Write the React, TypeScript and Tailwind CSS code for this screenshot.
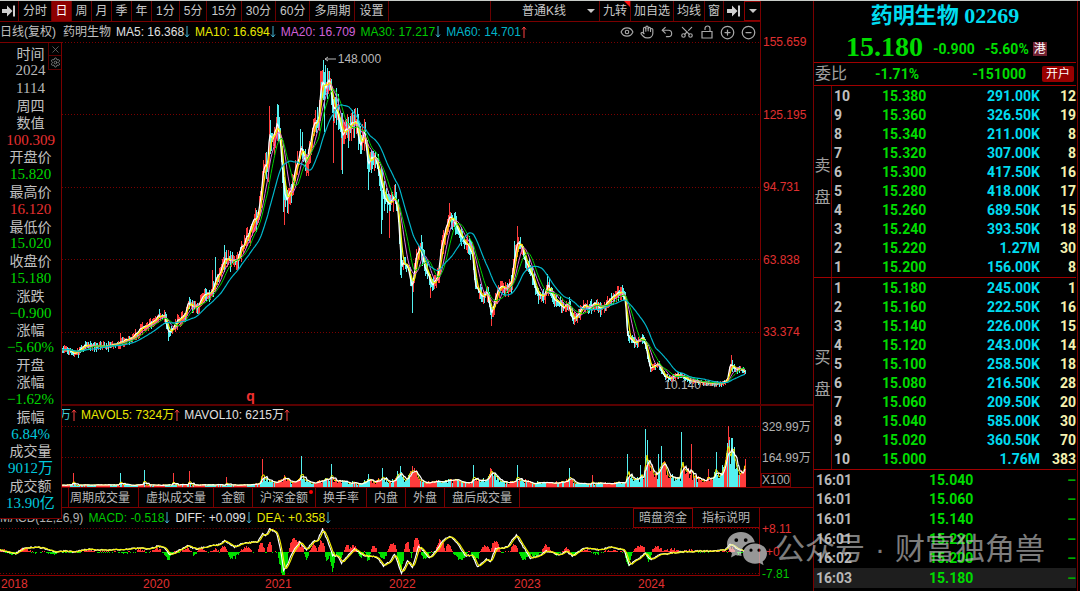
import React from "react";
import { Eye, Hand, Undo2, Scissors, CirclePlus, CircleMinus, X, Settings } from "lucide-react";

type Pt = [number, number];

function makeRandom(seed: number) {
  let s = seed;
  return () => {
    s = (s * 1664525 + 1013904223) % 4294967296;
    return s / 4294967296;
  };
}

function interpolate(points: Pt[], x: number) {
  for (let i = 1; i < points.length; i++) {
    if (x <= points[i][0]) {
      const [x0, y0] = points[i - 1];
      const [x1, y1] = points[i];
      return y0 + ((y1 - y0) * (x - x0)) / (x1 - x0);
    }
  }
  return points[points.length - 1][1];
}

function average(values: number[], size: number) {
  return values.map((_, i) => {
    const part = values.slice(Math.max(0, i - size + 1), i + 1);
    return part.reduce((a, b) => a + b, 0) / part.length;
  });
}

function toLine(values: number[], start: number) {
  return values.map((v, i) => `${i ? "L" : "M"}${start + i} ${v.toFixed(1)}`).join("");
}

const PRICE_TREND: Pt[] = [
  [62, 350], [68, 350], [75, 354], [84, 346], [95, 346], [108, 346], [118, 344], [124, 340], [133, 338], [140, 329],
  [147, 326], [153, 322], [158, 316], [164, 315], [168, 332], [172, 330], [177, 321], [185, 314], [188, 303], [193, 307],
  [198, 306], [203, 296], [212, 291], [216, 279], [221, 270], [225, 258], [230, 260], [237, 261], [240, 250], [248, 235],
  [252, 223], [258, 216], [261, 190], [263, 170], [267, 165], [269, 135], [273, 138], [277, 120], [280, 142], [284, 192],
  [287, 200], [291, 190], [295, 168], [301, 148], [306, 164], [310, 142], [314, 122], [318, 122], [320, 95], [322, 82],
  [326, 88], [329, 80], [333, 106], [337, 112], [342, 134], [348, 130], [355, 120], [360, 146], [364, 130], [368, 165],
  [375, 155], [380, 175], [384, 198], [390, 204], [394, 195], [398, 215], [401, 265], [405, 262], [408, 268], [412, 288],
  [416, 255], [420, 246], [425, 268], [432, 286], [438, 275], [441, 248], [445, 232], [449, 216], [455, 221], [460, 234],
  [467, 245], [472, 252], [475, 286], [482, 296], [487, 293], [491, 315], [496, 295], [500, 288], [506, 288], [511, 283],
  [515, 252], [518, 241], [522, 248], [526, 262], [532, 276], [537, 293], [543, 297], [548, 284], [553, 298], [558, 302],
  [563, 308], [568, 304], [572, 319], [577, 317], [584, 305], [590, 308], [595, 304], [600, 308], [607, 303], [613, 296],
  [617, 293], [621, 292], [625, 300], [627, 335], [634, 343], [639, 340], [643, 338], [646, 348], [650, 369], [654, 366],
  [658, 364], [664, 376], [670, 378], [677, 375], [682, 376], [690, 381], [700, 382], [710, 383], [722, 383], [727, 380],
  [730, 364], [735, 369], [740, 369], [745, 372],
];

const RED_WICKS: [number, number, number][] = [
  [269, 106, 125], [284, 190, 225], [288, 190, 208], [320, 71, 100], [321, 71, 95], [328, 71, 92], [333, 110, 163],
  [341, 120, 170], [355, 108, 125], [368, 160, 176], [389, 205, 238], [449, 203, 218], [491, 310, 326], [517, 226, 245],
  [430, 280, 298], [120, 333, 345], [212, 270, 290], [164, 313, 322], [731, 355, 368], [618, 286, 295], [306, 160, 176],
];
const TEAL_WICKS: [number, number, number][] = [
  [277, 104, 125], [300, 129, 150], [323, 60, 100], [329, 71, 90], [324, 90, 132], [342, 140, 174], [368, 168, 190],
  [381, 180, 234], [382, 190, 220], [412, 285, 313], [215, 257, 285], [224, 245, 270], [336, 88, 108], [283, 170, 212],
  [401, 240, 278], [168, 325, 341], [514, 241, 262], [538, 288, 304], [547, 274, 290], [400, 250, 275], [732, 360, 372],
  [270, 120, 150], [455, 212, 225],
];

function buildPrice() {
  const rand = makeRandom(23);
  const closes: number[] = [];
  let red = "";
  let teal = "";
  for (let x = 62; x <= 745; x++) {
    const trend = interpolate(PRICE_TREND, x);
    const amp = 1 + (392 - trend) * 0.024;
    const close = trend + (rand() - 0.5) * amp;
    const prev = closes.length ? closes[closes.length - 1] : close;
    const reach = amp * 2.2;
    const top = Math.max(64, Math.min(close, prev) - rand() * reach);
    const bottom = Math.max(close, prev) + rand() * reach;
    const seg = `M${x + 0.5} ${top.toFixed(1)}V${(bottom + 1).toFixed(1)}`;
    if (close + (rand() - 0.5) * amp < prev) red += seg;
    else teal += seg;
    closes.push(close);
  }
  RED_WICKS.forEach(([x, a, b]) => (red += `M${x + 0.5} ${a}V${b}`));
  TEAL_WICKS.forEach(([x, a, b]) => (teal += `M${x + 0.5} ${a}V${b}`));
  return { closes, red, teal };
}

const price = buildPrice();

const VOLUME_BASE: Pt[] = [
  [62, 2], [250, 2], [258, 3], [264, 8], [275, 5], [284, 8], [292, 4], [302, 7], [312, 4], [330, 8], [342, 5], [360, 3],
  [368, 7], [375, 4], [382, 10], [390, 5], [399, 13], [405, 6], [413, 16], [420, 6], [430, 4], [450, 7], [462, 4],
  [472, 4], [475, 8], [482, 5], [491, 15], [500, 6], [508, 4], [518, 8], [530, 4], [560, 4], [570, 7], [580, 3], [625, 4],
  [629, 14], [635, 6], [644, 10], [648, 26], [652, 12], [658, 10], [663, 20], [670, 10], [680, 9], [684, 22], [690, 10],
  [704, 6], [716, 12], [724, 14], [728, 36], [733, 34], [738, 16], [742, 11], [745, 20],
];
const VOLUME_SPIKES: [number, number, boolean][] = [
  [73, 14, true], [120, 14, false], [144, 17, false], [173, 14, true], [189, 16, true], [226, 10, true], [262, 28, true],
  [301, 31, false], [331, 23, false], [368, 13, false], [382, 19, false], [400, 21, false], [414, 19, true],
  [473, 22, false], [490, 19, true], [517, 22, false], [569, 19, false], [592, 12, true], [627, 33, false],
  [640, 22, false], [645, 58, false], [647, 47, false], [658, 33, false], [661, 41, false], [681, 55, false],
  [691, 43, true], [708, 18, true], [716, 35, false], [722, 22, false], [728, 61, true], [729, 50, true],
  [731, 49, false], [733, 36, false],
];

function buildVolume() {
  const rand = makeRandom(7);
  const values: number[] = [];
  let red = "";
  let teal = "";
  for (let x = 62; x <= 745; x++) {
    const base = interpolate(VOLUME_BASE, x);
    const value = Math.max(1, base * (0.65 + rand() * 0.8));
    const block = Math.sin(x / 3.1) + Math.sin(x / 7.3) + (rand() - 0.5) * 1.4;
    const seg = `M${x + 0.5} 487V${(487 - value).toFixed(1)}`;
    if (block > 0) red += seg;
    else teal += seg;
    values.push(487 - value);
  }
  VOLUME_SPIKES.forEach(([x, h, up]) => {
    const seg = `M${x + 0.5} 487V${487 - h}`;
    if (up) red += seg;
    else teal += seg;
    values[x - 62] = 487 - h * 0.7;
  });
  return { values, red, teal };
}

const volume = buildVolume();

const DIFF: Pt[] = [
  [0, 550], [15, 554], [24, 548], [38, 547], [47, 549], [55, 552], [66, 551], [75, 552], [88, 549], [100, 550],
  [115, 550], [130, 549], [140, 548], [150, 549], [158, 546], [165, 548], [170, 555], [178, 551], [188, 546], [197, 549],
  [210, 546], [218, 545], [225, 541], [235, 547], [243, 543], [258, 542], [263, 533], [266, 536], [270, 529], [277, 533],
  [281, 550], [284, 570], [288, 564], [293, 552], [300, 542], [307, 550], [313, 542], [318, 540], [323, 529], [328, 541],
  [333, 555], [338, 556], [342, 563], [348, 556], [355, 549], [365, 556], [377, 557], [384, 566], [391, 561], [395, 554],
  [402, 573], [408, 561], [413, 568], [419, 546], [424, 551], [430, 558], [438, 549], [443, 541], [450, 536], [458, 543],
  [466, 556], [473, 555], [478, 567], [487, 559], [491, 562], [496, 549], [508, 547], [513, 540], [517, 535], [524, 547],
  [531, 558], [540, 556], [547, 551], [560, 555], [567, 551], [573, 556], [585, 548], [600, 550], [612, 547], [625, 550],
  [630, 565], [640, 558], [646, 553], [652, 560], [660, 555], [680, 552], [700, 551], [715, 551], [726, 550], [731, 544],
  [738, 549], [745, 551],
];
const HISTOGRAM: [number, number, number][] = [
  [2, 3, 3], [12, 6, -3], [24, 7, 4], [52, 8, -2], [90, 8, 2], [120, 8, -1], [140, 5, 3], [156, 6, 4], [168, 5, -7],
  [186, 7, 4], [194, 4, -3], [202, 6, 3], [214, 5, 3], [224, 5, 6], [232, 8, -6], [246, 6, 5], [261, 4, 9], [269, 3, 11],
  [281, 4, -14], [284, 4, -20], [294, 6, 15], [301, 4, 7], [306, 3, -7], [313, 4, 8], [321, 4, 11], [327, 3, -9],
  [332, 3, -19], [340, 5, -6], [346, 5, 6], [354, 5, 7], [360, 4, -5], [368, 3, -9], [373, 4, 6], [383, 5, -8],
  [393, 5, 10], [401, 4, -19], [408, 4, 9], [412, 3, -6], [417, 5, 15], [426, 5, -6], [441, 5, 13], [449, 4, 7],
  [461, 8, -7], [476, 5, -8], [486, 6, 7], [496, 5, 12], [515, 4, 9], [525, 6, -8], [535, 5, -5], [547, 5, 7],
  [558, 4, -3], [567, 5, 4], [574, 4, -4], [586, 6, 3], [598, 6, -2], [611, 6, 2], [629, 4, -12], [641, 7, 7],
  [649, 4, -9], [658, 6, 6], [672, 8, 3], [690, 8, 2], [715, 12, 1], [732, 4, 4], [741, 4, -2],
];

function buildMacd() {
  const rand = makeRandom(91);
  let red = "";
  let green = "";
  for (let x = 0; x <= 745; x++) {
    let value = (rand() - 0.5) * 3;
    HISTOGRAM.forEach(([center, half, height]) => {
      const d = Math.abs(x - center) / half;
      if (d < 1) value += height * (1 - d * d) * (0.85 + rand() * 0.2);
    });
    const seg = `M${x} 552H${x + 1}V${(552 - value).toFixed(1)}H${x}Z`;
    if (value > 0) red += seg;
    else green += seg;
  }
  const diff = Array.from({ length: 746 }, (_, x) => interpolate(DIFF, x) + (rand() - 0.5) * 1.4);
  return { red, green, diff, dea: average(diff, 4) };
}

const macd = buildMacd();

function Arrow({ up = false }: { up?: boolean }) {
  return up ? (
    <svg className="h-3 w-1.5 shrink-0 text-[#ff4040]" viewBox="0 0 6 12" fill="none" stroke="currentColor" aria-hidden="true">
      <path d="M3 12V1M1 3.5L3 1L5 3.5" />
    </svg>
  ) : (
    <svg className="h-3 w-1.5 shrink-0 text-[#40b0d0]" viewBox="0 0 6 12" fill="none" stroke="currentColor" aria-hidden="true">
      <path d="M3 0V11M1 8.5L3 11L5 8.5" />
    </svg>
  );
}

function ToEndIcon() {
  return (
    <svg className="h-3 w-3.5" viewBox="0 0 14 12" fill="#d0d0d0" aria-hidden="true">
      <path d="M0 4H5V0.5L10.5 6L5 11.5V8H0ZM11 0.5H13V11.5H11Z" />
    </svg>
  );
}

function Caret() {
  return (
    <svg className="h-1 w-2" viewBox="0 0 8 4" fill="#c8c8c8" aria-hidden="true">
      <path d="M0 0H8L4 4Z" />
    </svg>
  );
}

function OpenLockIcon() {
  return (
    <svg className="h-3.5 w-3.5" viewBox="0 0 14 14" fill="none" stroke="currentColor" strokeWidth="1.2" aria-hidden="true">
      <path d="M2 6.5H12V13H2ZM5 5V3.5A2.5 2.5 0 0 1 10 3.5V6.5" />
    </svg>
  );
}

const PERIODS = ["分时", "日", "周", "月", "季", "年", "1分", "5分", "15分", "30分", "60分", "多周期", "设置"];

function Toolbar() {
  return (
    <div className="flex h-[21px] shrink-0 items-stretch border-b border-[#7a0000] text-[#c8c8c8]">
      <button aria-label="隐藏" className="flex w-[18px] items-center justify-center">
        <ToEndIcon />
      </button>
      <div className="flex border-l border-[#6a0000]">
        {PERIODS.map((p) => (
          <button
            key={p}
            className={`border-r border-[#6a0000] whitespace-nowrap ${p.length === 1 ? "w-5" : "px-1"} ${p === "日" ? "bg-[#8c0000] text-white" : ""}`}
          >
            {p}
          </button>
        ))}
      </div>
      <div className="ml-auto flex">
        <div className="relative flex w-[110px] border-x border-[#6a0000]">
          <select aria-label="K线类型" className="w-full appearance-none bg-black pl-[31px] outline-none">
            <option>普通K线</option>
          </select>
          <span className="pointer-events-none absolute inset-y-0 right-1 flex items-center">
            <Caret />
          </span>
        </div>
        <button className="relative border-r border-[#6a0000] px-[3px]">
          九转
          <svg className="absolute top-0 right-0 h-1.5 w-1.5" viewBox="0 0 6 6" fill="#ff1010" aria-hidden="true">
            <path d="M0 0H6V6Z" />
          </svg>
        </button>
        <button className="border-r border-[#6a0000] px-[3px]">加自选</button>
        <button className="border-r border-[#6a0000] px-[3px]">均线</button>
        <button className="border-r border-[#6a0000] px-[3px]">窗</button>
        <button aria-label="收起" className="flex w-5 items-center justify-center">
          <ToEndIcon />
        </button>
        <button aria-label="更多" className="flex w-4 items-center justify-center border border-r-0 border-[#8c0000]">
          <Caret />
        </button>
      </div>
    </div>
  );
}

const TOOLS = [
  { label: "显示", icon: <Eye size={14} strokeWidth={2} /> },
  { label: "拖动", icon: <Hand size={14} strokeWidth={2} /> },
  { label: "撤销", icon: <Undo2 size={14} strokeWidth={2} /> },
  { label: "截取", icon: <Scissors size={14} strokeWidth={2} className="-rotate-90" /> },
  { label: "锁定", icon: <OpenLockIcon /> },
  { label: "放大", icon: <CirclePlus size={15} strokeWidth={2} /> },
  { label: "缩小", icon: <CircleMinus size={15} strokeWidth={2} /> },
];

function AverageRow() {
  return (
    <div className="flex h-5 shrink-0 items-center justify-between pr-1">
      <div className="flex items-center gap-[5px] whitespace-nowrap">
        <span className="mr-0.5 text-[#c0c0c0]">日线(复权)</span>
        <span className="text-[#c0c0c0]">药明生物</span>
        <span className="flex items-center text-[#e0e0e0]">MA5: 16.368<Arrow /></span>
        <span className="flex items-center text-[#e8e800]">MA10: 16.694<Arrow /></span>
        <span className="text-[#d060d8]">MA20: 16.709</span>
        <span className="flex items-center text-[#00c800]">MA30: 17.217<Arrow /></span>
        <span className="flex items-center text-[#00b4c8]">MA60: 14.701<Arrow up /></span>
      </div>
      <div className="flex items-center gap-1.5 text-[#a8a8a8]">
        {TOOLS.map((t) => (
          <button key={t.label} aria-label={t.label}>
            {t.icon}
          </button>
        ))}
      </div>
    </div>
  );
}

function PriceChart() {
  return (
    <div className="relative min-h-0 flex-1">
      <svg className="absolute inset-0 h-full w-full" viewBox="0 42 760 362" preserveAspectRatio="none" fill="none" role="img" aria-label="K线图">
        <path d="M62 42.5H760M62 114.5H760M62 187.5H760M62 259.5H760M62 332.5H760" stroke="#7a0000" strokeDasharray="1 2" />
        <path d={price.red} stroke="#ff3c3c" shapeRendering="crispEdges" />
        <path d={price.teal} stroke="#54f0f0" shapeRendering="crispEdges" />
        <path d={toLine(average(price.closes, 2), 62)} stroke="#ffffff" strokeWidth="1.3" />
        <path d={toLine(average(price.closes, 5), 62)} stroke="#f4f000" strokeWidth="1.2" />
        <path d={toLine(average(price.closes, 10), 62)} stroke="#e070e0" />
        <path d={toLine(average(price.closes, 15), 62)} stroke="#00d000" />
        <path d={toLine(average(price.closes, 30), 62)} stroke="#00b8cc" strokeWidth="1.2" />
      </svg>
      <div className="absolute top-[2.5%] left-[42.6%] flex items-center gap-0.5 text-[#b8b8b8]">
        <svg className="h-1.5 w-3" viewBox="0 0 12 6" fill="none" stroke="currentColor" aria-hidden="true">
          <path d="M12 3H1M4 1L1 3L4 5" />
        </svg>
        148.000
      </div>
      <div className="absolute bottom-[3%] left-[87.4%] flex items-center gap-0.5 text-[#b8b8b8]">
        10.140
        <svg className="h-1.5 w-4" viewBox="0 0 16 6" fill="none" stroke="currentColor" aria-hidden="true">
          <path d="M0 3H14M11 1L14 3L11 5" />
        </svg>
      </div>
      <span className="absolute bottom-0 left-[32.4%] text-sm leading-4 font-bold text-[#f03030]">q</span>
    </div>
  );
}

const TABS = ["周期成交量", "虚拟成交量", "金额", "沪深金额", "换手率", "内盘", "外盘", "盘后成交量"];

function IndicatorTabs() {
  return (
    <div className="flex h-5 shrink-0 border-b border-[#7a0000] pl-[68px] text-[#b8b8b8]">
      {TABS.map((t, i) => (
        <button
          key={t}
          className={`relative border-r border-[#7a0000] whitespace-nowrap ${i === 0 ? "border-l pr-2 pl-px" : "px-[7px]"}`}
        >
          {t}
          {t === "沪深金额" && <span className="absolute top-0.5 right-0.5 h-1 w-1 rounded-full bg-[#ff0000]" />}
        </button>
      ))}
    </div>
  );
}

const INFO: [string, string][] = [
  ["时间", "text-[#c0c0c0]"], ["2024", "text-[#b8b8b8]"], ["1114", "text-[#b8b8b8]"], ["周四", "text-[#c0c0c0]"],
  ["数值", "text-[#c0c0c0]"], ["100.309", "text-[#e83030]"], ["开盘价", "text-[#c0c0c0]"], ["15.820", "text-[#00d800]"],
  ["最高价", "text-[#c0c0c0]"], ["16.120", "text-[#e83030]"], ["最低价", "text-[#c0c0c0]"], ["15.020", "text-[#00d800]"],
  ["收盘价", "text-[#c0c0c0]"], ["15.180", "text-[#00d800]"], ["涨跌", "text-[#c0c0c0]"], ["−0.900", "text-[#00d800]"],
  ["涨幅", "text-[#c0c0c0]"], ["−5.60%", "text-[#00d800]"], ["开盘", "text-[#c0c0c0]"], ["涨幅", "text-[#c0c0c0]"],
  ["−1.62%", "text-[#00d800]"], ["振幅", "text-[#c0c0c0]"], ["6.84%", "text-[#00c8dc]"], ["成交量", "text-[#c0c0c0]"],
  ["9012万", "text-[#00c8dc]"], ["成交额", "text-[#c0c0c0]"], ["13.90亿", "text-[#00c8dc]"],
];

function InfoPanel() {
  return (
    <aside className="absolute top-[42px] bottom-[72px] left-0 flex w-[62px] flex-col border border-l-0 border-[#7a0000] bg-black pt-0.5 pb-1.5">
      {INFO.map(([text, color], i) => (
        <div
          key={i}
          className={`flex min-h-0 flex-1 items-center justify-center ${/^[^0-9]+$/.test(text) ? "text-sm" : "font-['Liberation_Serif','Noto_Sans_CJK_SC',serif] text-[15px]"} leading-none ${color}`}
        >
          {text}
        </div>
      ))}
      <div className="absolute top-0 right-0 flex flex-col border-b border-l border-[#5a0000] bg-black text-[#808080]">
        <button aria-label="关闭" className="flex h-[13px] w-3 items-center justify-center border-b border-[#5a0000]">
          <X size={11} strokeWidth={1.5} />
        </button>
        <button aria-label="设置" className="flex h-[13px] w-3 items-center justify-center">
          <Settings size={11} strokeWidth={2} />
        </button>
      </div>
    </aside>
  );
}

type Quote = [string, string, string, string];

const SELL: Quote[] = [
  ["10", "15.380", "291.00K", "12"], ["9", "15.360", "326.50K", "19"], ["8", "15.340", "211.00K", "8"],
  ["7", "15.320", "307.00K", "8"], ["6", "15.300", "417.50K", "16"], ["5", "15.280", "418.00K", "17"],
  ["4", "15.260", "689.50K", "15"], ["3", "15.240", "393.50K", "18"], ["2", "15.220", "1.27M", "30"],
  ["1", "15.200", "156.00K", "8"],
];
const BUY: Quote[] = [
  ["1", "15.180", "245.00K", "1"], ["2", "15.160", "222.50K", "16"], ["3", "15.140", "226.00K", "15"],
  ["4", "15.120", "243.00K", "14"], ["5", "15.100", "258.50K", "18"], ["6", "15.080", "216.50K", "28"],
  ["7", "15.060", "209.50K", "20"], ["8", "15.040", "585.00K", "30"], ["9", "15.020", "360.50K", "70"],
  ["10", "15.000", "1.76M", "383"],
];
const TICKS: [string, string][] = [
  ["16:01", "15.040"], ["16:01", "15.060"], ["16:01", "15.140"], ["16:01", "15.220"], ["16:02", "15.200"],
  ["16:03", "15.180"],
];

function QuoteSection({ side, rows }: { side: string; rows: Quote[] }) {
  return (
    <section className="flex h-48 shrink-0 border-b border-[#a00000]">
      <div className="flex w-[18px] flex-col items-center justify-center border-r border-[#7a0000] text-base leading-8 text-[#a0a0a0]">
        {side.split("").map((c) => (
          <span key={c}>{c}</span>
        ))}
      </div>
      <table className="h-full flex-1 table-fixed text-sm leading-none font-bold">
        <tbody>
          {rows.map(([level, value, amount, count]) => (
            <tr key={level}>
              <td className="w-8 p-0 pl-0.5 text-[#c0c0c0]">{level}</td>
              <td className="p-0 pl-[18px] text-[#00dc00]">{value}</td>
              <td className="w-24 p-0 text-right text-[#00dcf0]">{amount}</td>
              <td className="w-9 p-0 text-right text-[#f4f0b0]">{count}</td>
            </tr>
          ))}
        </tbody>
      </table>
    </section>
  );
}

function QuotePanel() {
  return (
    <div className="mr-0.5 flex w-[265px] shrink-0 flex-col border-x border-[#7a0000] pr-px font-[Roboto,'Noto_Sans_CJK_SC',sans-serif]">
      <h1 className="flex h-[30px] items-center justify-center font-['Liberation_Serif','Noto_Sans_CJK_SC',serif] text-[22px] leading-none font-bold text-[#00dcf0]">
        药明生物 02269
      </h1>
      <div className="flex h-8 items-center gap-2.5 border-b border-[#a00000] pl-8 text-sm font-bold text-[#00dc00]">
        <span className="font-['Liberation_Serif',serif] text-[28px] leading-none">15.180</span>
        <span className="pt-1">-0.900</span>
        <span className="flex items-center gap-1 pt-1">
          -5.60%
          <span className="flex h-3.5 w-3.5 items-center justify-center bg-[#702030] text-xs leading-none font-normal text-white">港</span>
        </span>
      </div>
      <div className="flex h-[23px] items-center border-b border-[#a00000] pr-0.5 pl-px text-sm font-bold text-[#00dc00]">
        <span className="w-[60px] text-base leading-none font-normal text-[#a0a0a0]">委比</span>
        <span className="flex-1">-1.71%</span>
        <span>-151000</span>
        <button className="ml-4 h-4 rounded-xs bg-[#980000] px-1 text-xs leading-none font-normal text-white">开户</button>
      </div>
      <QuoteSection side="卖盘" rows={SELL} />
      <QuoteSection side="买盘" rows={BUY} />
      <table className="h-[118px] w-full text-sm leading-none font-bold">
        <tbody>
          {TICKS.map(([time, value], i) => (
            <tr key={i} className={i === TICKS.length - 1 ? "bg-[#1e1e1e]" : ""}>
              <td className="w-[115px] p-0 pl-0.5 text-[#b8b8b8]">{time}</td>
              <td className="p-0 text-[#00dc00]">{value}</td>
              <td className="w-4 p-0 text-right text-[#00a800]">–</td>
            </tr>
          ))}
        </tbody>
      </table>
    </div>
  );
}

function Watermark() {
  return (
    <div className="pointer-events-none absolute right-[35px] bottom-6 flex items-center gap-2 text-[#c0c0c0] opacity-65">
      <svg className="h-[34px] w-10" viewBox="0 0 40 34" fill="#e8e8e8" aria-hidden="true">
        <path
          fillRule="evenodd"
          d="M14 0C6 0 0 5.3 0 12C0 15.8 2 19 5 21.2L4 25.5L8.8 23C10.5 23.6 12.3 23.9 14.6 23.9C14.3 23 14.2 22.1 14.2 21.2C14.2 15 20 10.3 27.8 10.3C26.5 4.4 20.9 0 14 0ZM9.3 6.2A1.9 1.9 0 1 1 9.3 10A1.9 1.9 0 1 1 9.3 6.2ZM18.7 6.2A1.9 1.9 0 1 1 18.7 10A1.9 1.9 0 1 1 18.7 6.2Z"
        />
        <path
          fillRule="evenodd"
          d="M28 11.5C21.2 11.5 16 16 16 21.6C16 27.2 21.2 31.7 28 31.7C29.6 31.7 31.2 31.4 32.6 31L36.6 33.2L35.6 29.6C38.3 27.7 40 24.8 40 21.6C40 16 34.7 11.5 28 11.5ZM24 16.6A1.6 1.6 0 1 1 24 19.8A1.6 1.6 0 1 1 24 16.6ZM32 16.6A1.6 1.6 0 1 1 32 19.8A1.6 1.6 0 1 1 32 16.6Z"
        />
      </svg>
      <span className="flex gap-2.5 text-3xl leading-9 whitespace-nowrap">
        <span>公众号</span>
        <span>·</span>
        <span>财富独角兽</span>
      </span>
    </div>
  );
}

export default function App() {
  return (
    <div className="relative flex min-h-screen border-t border-[#c8ccc8] bg-black font-['Liberation_Sans','Noto_Sans_CJK_SC',sans-serif] text-xs leading-4">
      <main className="relative -mt-px flex min-w-0 flex-1 flex-col pt-px">
        <div className="flex min-h-[405px] flex-1 border-b-2 border-[#5a0000]">
          <div className="flex min-w-0 flex-1 flex-col">
            <Toolbar />
            <AverageRow />
            <PriceChart />
          </div>
          <div className="flex w-[53px] shrink-0 flex-col justify-between border-l border-[#7a0000] pt-[33px] pb-16 pl-0.5 text-[#e03030]">
            <span>155.659</span>
            <span>125.195</span>
            <span>94.731</span>
            <span>63.838</span>
            <span>33.374</span>
          </div>
        </div>

        <div className="flex h-[82px] shrink-0 border-b border-[#7a0000]">
          <div className="flex min-w-0 flex-1 flex-col">
            <div className="flex h-[18px] items-center gap-1 pl-[59px] whitespace-nowrap">
              <span className="flex items-center text-[#40c8d8]">万<Arrow up /></span>
              <span className="flex items-center text-[#e8e800]">MAVOL5: 7324万<Arrow up /></span>
              <span className="flex items-center text-[#e0e0e0]">MAVOL10: 6215万<Arrow up /></span>
            </div>
            <svg className="h-[63px] w-full" viewBox="0 424 760 63" preserveAspectRatio="none" fill="none" role="img" aria-label="成交量">
              <path d="M62 426.5H760M62 457.5H760" stroke="#7a0000" strokeDasharray="1 2" />
              <path d={volume.red} stroke="#ff3c3c" shapeRendering="crispEdges" />
              <path d={volume.teal} stroke="#54f0f0" shapeRendering="crispEdges" />
              <path d={toLine(average(volume.values, 3), 62)} stroke="#f4f000" />
              <path d={toLine(average(volume.values, 6), 62)} stroke="#ffffff" strokeWidth="1.2" />
            </svg>
          </div>
          <div className="flex w-[53px] shrink-0 flex-col items-start border-l border-[#7a0000] pt-[13px] text-[#b0b0b0]">
            <span className="h-[31px] pl-px whitespace-nowrap">329.99万</span>
            <span className="h-[23px] pl-px whitespace-nowrap">164.99万</span>
            <span className="h-3.5 border border-[#7a0000] leading-3">X100</span>
          </div>
        </div>

        <IndicatorTabs />

        <div className="flex h-[83px] shrink-0">
          <div className="flex min-w-0 flex-1 flex-col">
            <div className="flex h-5 items-center justify-between border-r border-[#7a0000]">
              <div className="flex items-center gap-[5px] whitespace-nowrap">
                <span className="text-[#b0b0b0]">MACD(12,26,9)</span>
                <span className="flex items-center text-[#00c800]">MACD: -0.518<Arrow /></span>
                <span className="flex items-center text-[#e0e0e0]">DIFF: +0.099<Arrow /></span>
                <span className="flex items-center text-[#e8e800]">DEA: +0.358<Arrow /></span>
              </div>
              <div className="flex h-full text-[#b8b8b8]">
                <button className="border border-[#8c0000] px-[5px]">暗盘资金</button>
                <button className="border-b border-[#8c0000] px-[9px]">指标说明</button>
              </div>
            </div>
            <div className="flex h-[47px] border-r border-[#7a0000]">
              <svg className="h-full w-full" viewBox="0 528 760 47" preserveAspectRatio="none" fill="none" role="img" aria-label="MACD">
                <path d="M0 528.5H760M0 573.5H760" stroke="#7a0000" strokeDasharray="1 2" />
                <path d={macd.red} fill="#ff3232" shapeRendering="crispEdges" />
                <path d={macd.green} fill="#00e000" shapeRendering="crispEdges" />
                <path d={toLine(macd.diff, 0)} stroke="#ffffff" strokeWidth="1.2" />
                <path d={toLine(macd.dea, 0)} stroke="#f4f000" strokeWidth="1.2" />
              </svg>
            </div>
            <div className="grid h-4 grid-cols-[142fr_122fr_124fr_125fr_124fr_123fr] border-t border-[#8c0000] text-[#e03030]">
              {["2018", "2020", "2021", "2022", "2023", "2024"].map((y) => (
                <span key={y} className="pl-px">
                  {y}
                </span>
              ))}
            </div>
          </div>
          <div className="flex w-[53px] shrink-0 flex-col justify-between pt-[13px] pb-[9px] pl-0.5 text-[#e03030]">
            <span>+8.11</span>
            <span className="pl-1">+0</span>
            <span className="text-[#00c800]">-7.81</span>
          </div>
        </div>
        <InfoPanel />
      </main>
      <QuotePanel />
      <Watermark />
    </div>
  );
}
